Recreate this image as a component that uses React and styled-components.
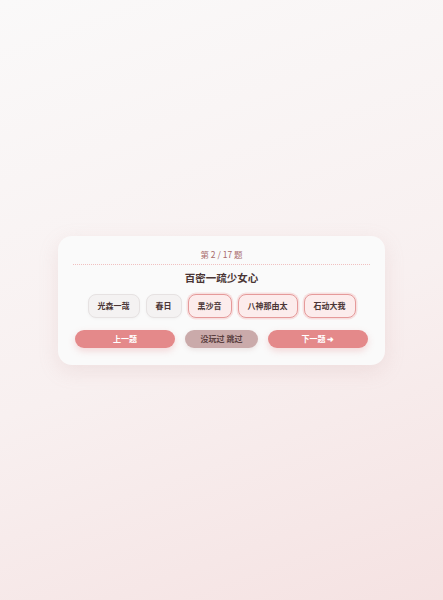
import React from "react";
import styled, { createGlobalStyle } from "styled-components";

const GlobalStyle = createGlobalStyle`
  html, body {
    margin: 0;
    padding: 0;
  }
  body {
    font-family: "Noto Sans CJK SC", "Noto Sans", sans-serif;
  }
`;

const Page = styled.div`
  width: 100%;
  height: 100vh;
  display: flex;
  justify-content: center;
  align-items: center;
  background: linear-gradient(160deg, #faf9f9 0%, #f8f0f0 55%, #f5e2e2 100%);
`;

const Card = styled.div`
  width: 327px;
  box-sizing: border-box;
  padding: 12px 15px 17px;
  background: #fafafa;
  border-radius: 14px;
  box-shadow: 0 6px 20px rgba(200, 150, 150, 0.18);
  display: flex;
  flex-direction: column;
  align-items: stretch;
`;

const Counter = styled.div`
  text-align: center;
  font-size: 8.5px;
  color: #a86a6a;
  line-height: 12px;
  padding-bottom: 4px;
  border-bottom: 1.5px dotted #f0c0c0;
`;

const Title = styled.div`
  text-align: center;
  font-size: 10.5px;
  font-weight: 700;
  color: #4a3535;
  margin-top: 6px;
  line-height: 14px;
`;

const Options = styled.div`
  display: flex;
  justify-content: center;
  gap: 6px;
  margin-top: 9px;
`;

const Option = styled.button`
  height: 24px;
  padding: 0 9px;
  border-radius: 8px;
  font-family: inherit;
  font-size: 8px;
  font-weight: 700;
  color: #4a3535;
  border: 1.5px solid ${(p) => (p.$hot ? "#e59a9a" : "#e6e2e2")};
  background: ${(p) => (p.$hot ? "#fcecec" : "#f4f2f2")};
  box-shadow: ${(p) =>
    p.$hot ? "0 0 0 1.5px rgba(240,175,175,0.35)" : "0 1px 3px rgba(0,0,0,0.04)"};
`;

const Actions = styled.div`
  display: flex;
  justify-content: space-between;
  align-items: center;
  margin-top: 12px;
  padding: 0 2px;
`;

const Action = styled.button`
  width: ${(p) => (p.$skip ? "73px" : "100px")};
  height: 18px;
  border: none;
  border-radius: 9px;
  font-family: inherit;
  font-size: 8px;
  font-weight: 700;
  color: ${(p) => (p.$skip ? "#5a3f3f" : "#ffffff")};
  background: ${(p) => (p.$skip ? "#caaaaa" : "#e4898a")};
  box-shadow: ${(p) =>
    p.$skip ? "0 2px 5px rgba(180,140,140,0.2)" : "0 3px 7px rgba(228,137,138,0.3)"};
`;

const App = () => {
  const options = [
    { name: "光森一哉", hot: false },
    { name: "春日", hot: false },
    { name: "黑沙音", hot: true },
    { name: "八神那由太", hot: true },
    { name: "石动大我", hot: true },
  ];

  return (
    <>
      <GlobalStyle />
      <Page>
        <Card>
          <Counter>第 2 / 17 题</Counter>
          <Title>百密一疏少女心</Title>
          <Options>
            {options.map((o) => (
              <Option key={o.name} $hot={o.hot}>
                {o.name}
              </Option>
            ))}
          </Options>
          <Actions>
            <Action>上一题</Action>
            <Action $skip>没玩过 跳过</Action>
            <Action>下一题 ➜</Action>
          </Actions>
        </Card>
      </Page>
    </>
  );
};

export default App;
